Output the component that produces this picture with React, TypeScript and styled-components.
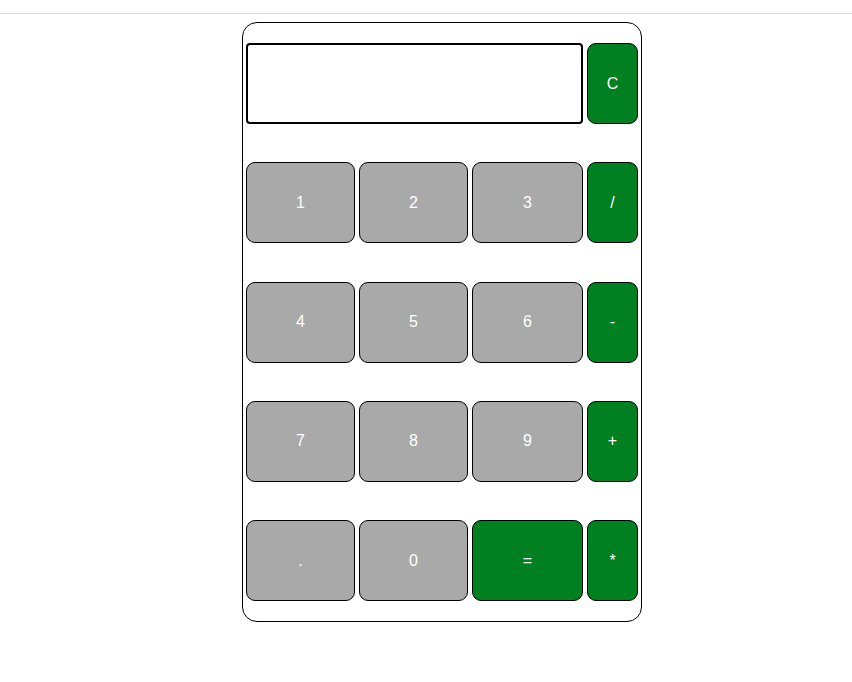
import React from "react";
import styled, { createGlobalStyle } from "styled-components";

const GlobalStyle = createGlobalStyle`
  html, body { margin: 0; padding: 0; background: #ffffff; }
  body { font-family: "Liberation Sans", Arial, sans-serif; }
`;

const TopRule = styled.div`
  margin-top: 13px;
  height: 1px;
  background: #dedede;
`;

const Page = styled.main`
  padding-left: 32px;
`;

const Calculator = styled.div`
  box-sizing: border-box;
  width: 400px;
  height: 600px;
  margin: 8px auto 0;
  border: 1px solid #000;
  border-radius: 15px;
  padding: 20px 3px;
  display: grid;
  grid-template-columns: 109px 109px 111px 51px;
  grid-template-rows: repeat(5, 81px);
  column-gap: 4px;
  align-content: space-between;
`;

const Display = styled.input`
  grid-column: span 3;
  box-sizing: border-box;
  width: 100%;
  height: 81px;
  border: 2px solid #000;
  border-radius: 4px;
  margin: 0;
  padding: 0 8px;
  font-family: "Liberation Sans", Arial, sans-serif;
  font-size: 24px;
  text-align: right;
  outline: none;
  background: #fff;
`;

const Key = styled.button<{ $op?: boolean }>`
  box-sizing: border-box;
  width: 100%;
  height: 81px;
  margin: 0;
  padding: 0;
  border: 1px solid #000;
  border-radius: 9px;
  background: ${(p) => (p.$op ? "#008020" : "#a9a9a9")};
  color: #ffffff;
  font-family: "Liberation Sans", Arial, sans-serif;
  font-size: 16px;
  cursor: pointer;
`;

const rows: { label: string; op?: boolean }[][] = [
  [{ label: "1" }, { label: "2" }, { label: "3" }, { label: "/", op: true }],
  [{ label: "4" }, { label: "5" }, { label: "6" }, { label: "-", op: true }],
  [{ label: "7" }, { label: "8" }, { label: "9" }, { label: "+", op: true }],
  [{ label: "." }, { label: "0" }, { label: "=", op: true }, { label: "*", op: true }],
];

export default function App() {
  const [value, setValue] = React.useState("");
  const press = (k: string) => {
    if (k === "=") {
      try {
        // eslint-disable-next-line no-new-func
        setValue(String(Function(`return (${value || 0})`)()));
      } catch {
        setValue("Error");
      }
    } else {
      setValue((v) => v + k);
    }
  };
  return (
    <>
      <GlobalStyle />
      <TopRule />
      <Page>
        <Calculator>
          <Display value={value} onChange={(e) => setValue(e.target.value)} />
          <Key $op onClick={() => setValue("")}>C</Key>
          {rows.flat().map((k) => (
            <Key key={k.label} $op={k.op} onClick={() => press(k.label)}>
              {k.label}
            </Key>
          ))}
        </Calculator>
      </Page>
    </>
  );
}
